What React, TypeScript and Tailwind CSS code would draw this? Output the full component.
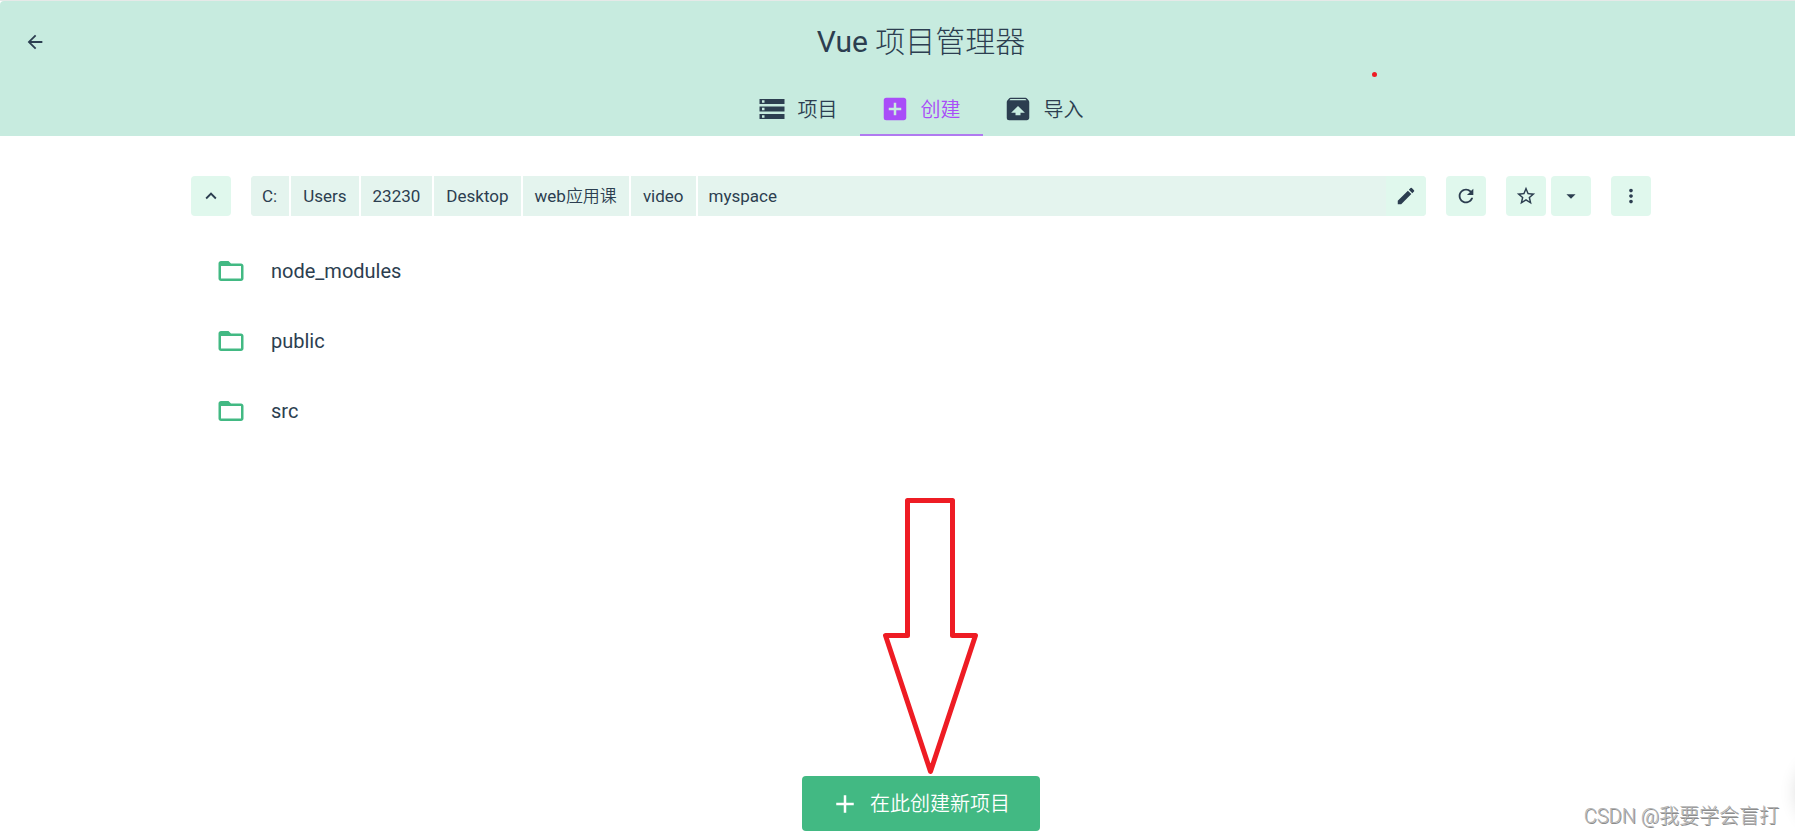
import { useState, type ReactNode } from "react";
import {
  MdAdd,
  MdAddBox,
  MdArrowBack,
  MdArrowDropDown,
  MdEdit,
  MdFolderOpen,
  MdKeyboardArrowUp,
  MdMoreVert,
  MdRefresh,
  MdStarBorder,
  MdStorage,
  MdUnarchive,
} from "react-icons/md";

const tabs = [
  { label: "项目", icon: MdStorage },
  { label: "创建", icon: MdAddBox },
  { label: "导入", icon: MdUnarchive },
];

const folders = ["node_modules", "public", "src"];

function ToolButton({ label, children }: { label: string; children: ReactNode }) {
  return (
    <button
      type="button"
      aria-label={label}
      className="flex size-10 shrink-0 items-center justify-center rounded-[4px] bg-[#e0f8ed] text-[22px]"
    >
      {children}
    </button>
  );
}

function Crumb({ children }: { children: ReactNode }) {
  return (
    <button type="button" className="border-r-2 border-white bg-[#e4f4ee] pr-3 pl-[11px] whitespace-nowrap">
      {children}
    </button>
  );
}

function Breadcrumbs() {
  return (
    <nav
      aria-label="Path"
      className="flex h-10 min-w-0 flex-1 gap-px overflow-hidden rounded-[4px] bg-[#e4f4ee] text-[17px] leading-[38px]"
    >
      <Crumb>C:</Crumb>
      <Crumb>Users</Crumb>
      <Crumb>23230</Crumb>
      <Crumb>Desktop</Crumb>
      <Crumb>
        web<span className="font-[350]">应用课</span>
      </Crumb>
      <Crumb>video</Crumb>
      <button type="button" className="pr-3 pl-[10px]">
        myspace
      </button>
      <span className="flex-1" />
      <button type="button" aria-label="Edit path" className="flex w-10 items-center justify-center bg-[#e0f8ed] text-[22px]">
        <MdEdit />
      </button>
    </nav>
  );
}

function PointerArrow() {
  return (
    <svg
      className="pointer-events-none absolute bottom-full left-20"
      width="98"
      height="280"
      viewBox="0 0 98 280"
      fill="none"
      stroke="#ee1c24"
      strokeWidth="5"
      strokeLinejoin="round"
      aria-hidden="true"
    >
      <path d="M25.5 4.5H70.5V139.5H93.5L48.5 275.5L3.5 139.5H25.5Z" />
    </svg>
  );
}

export default function App() {
  const [active, setActive] = useState(1);

  return (
    <div className="relative flex min-h-screen flex-col overflow-hidden border-t border-[#e6e9e8] bg-white font-[Roboto,'Noto_Sans_CJK_SC',sans-serif] text-[20px] text-[#2c3e50]">
      <header className="rounded-tl-[4px] bg-[#c7ebdf]">
        <div className="flex h-20 items-center pt-px pr-2 pl-[15px]">
          <button type="button" aria-label="Back" className="flex size-10 items-center justify-center text-[22px]">
            <MdArrowBack />
          </button>
          <h1 className="flex-1 text-center text-[30px] leading-[40px]">
            Vue <span className="font-light">项目管理器</span>
          </h1>
        </div>
        <div role="tablist" className="flex justify-center pl-[47px]">
          {tabs.map(({ label, icon: Icon }, i) => (
            <button
              key={label}
              type="button"
              role="tab"
              aria-selected={i === active}
              onClick={() => setActive(i)}
              className={
                i === active
                  ? "flex h-[55px] items-center gap-[11px] border-b-2 border-[#b07af0] pt-[2px] pr-[22px] pl-5 text-[#a94df8]"
                  : "flex h-[55px] items-center gap-[11px] border-b-2 border-transparent pt-[2px] pr-[22px] pl-5"
              }
            >
              <Icon className="size-[30px]" />
              <span className="pt-[2px] font-[350]">{label}</span>
            </button>
          ))}
        </div>
      </header>

      <main className="flex flex-1 flex-col pt-10 pl-[47px]">
        <div className="mx-auto flex w-full max-w-[1460px] flex-1 flex-col">
          <div className="flex gap-5">
            <ToolButton label="Parent folder">
              <MdKeyboardArrowUp />
            </ToolButton>
            <Breadcrumbs />
            <ToolButton label="Refresh">
              <MdRefresh />
            </ToolButton>
            <div className="flex gap-[5px]">
              <ToolButton label="Add to favorites">
                <MdStarBorder />
              </ToolButton>
              <ToolButton label="Favorites">
                <MdArrowDropDown />
              </ToolButton>
            </div>
            <ToolButton label="More">
              <MdMoreVert />
            </ToolButton>
          </div>

          <ul className="pt-5">
            {folders.map((name) => (
              <li key={name}>
                <button type="button" className="flex h-[70px] w-full items-center gap-[25px] px-[25px] text-left">
                  <MdFolderOpen className="size-[30px] text-[#42b983]" />
                  {name}
                </button>
              </li>
            ))}
          </ul>
        </div>

        <div className="flex justify-center pb-1">
          <div className="relative">
            <PointerArrow />
            <button
              type="button"
              className="flex h-[55px] items-center gap-[10px] rounded-[4px] bg-[#42b983] pr-[30px] pl-7 text-white"
            >
              <MdAdd className="size-[30px]" />
              <span className="font-[350]">在此创建新项目</span>
            </button>
          </div>
        </div>
      </main>

      <span className="absolute top-[71px] left-[1372px] size-[5px] rounded-full bg-[#ee1c24]" />
      <span className="absolute -right-[72px] bottom-2 h-[70px] w-[70px] rounded-full shadow-[0_0_18px_rgba(0,0,0,0.16)]" />
      <p className="absolute right-4 bottom-1 leading-[30px] font-light text-[#b4b4b4] [text-shadow:1px_1px_0_#8c8c8c]">
        CSDN @我要学会盲打
      </p>
    </div>
  );
}
